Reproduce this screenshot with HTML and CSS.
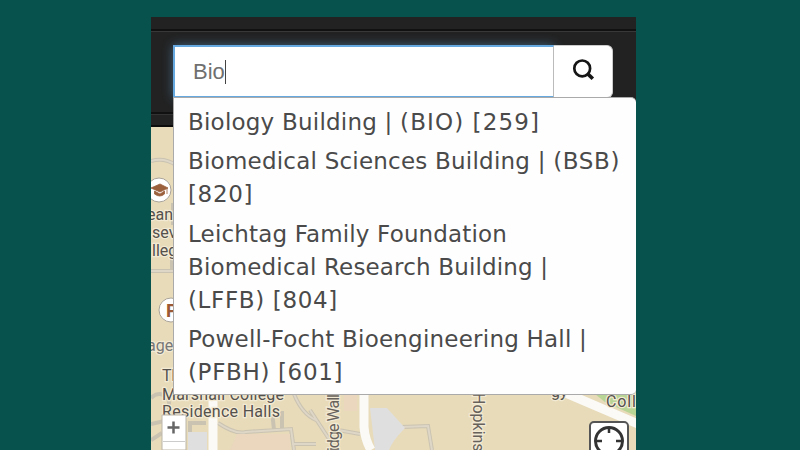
FILE: index.html
```html
<!DOCTYPE html>
<html lang="en">
<head>
<meta charset="utf-8">
<title>Campus map search</title>
<link rel="stylesheet" href="styles.css">
</head>
<body>
<main class="panel">
  <header class="bar">
    <form class="search">
      <div class="field"><span>Bio</span><i class="caret"></i></div>
      <button class="go" type="button" aria-label="Search">
        <svg width="24" height="24" viewBox="0 0 24 24" fill="none" stroke="#161616"><circle cx="10.2" cy="10.4" r="7.9" stroke-width="2.7"/><path d="M15.5 15.6L20.8 20.8" stroke-width="3.6"/></svg>
      </button>
      <ul class="results">
        <li><span class="name">Biology Building | </span><span class="wide">(BIO) [259]</span></li>
        <li class="loose"><span class="name">Biomedical Sciences Building | </span><span class="code">(BSB)<br>[820]</span></li>
        <li>Leichtag Family Foundation<br>Biomedical Research Building |<br><span class="code">(LFFB) [804]</span></li>
        <li><span class="name">Powell-Focht Bioengineering Hall |</span><br><span class="code">(PFBH) [601]</span></li>
      </ul>
    </form>
  </header>
  <svg class="map" width="485" height="323" viewBox="151 127 485 323">
    <rect x="151" y="127" width="485" height="323" fill="#e7dbb9"/>
    <g fill="none" stroke="#cbc3b2" stroke-width="4">
      <path d="M151 161Q164 157 176 165M173 203V225M151 271H176M172 256V271M151 398Q160 389 169 400V420L151 424M151 440L162 433M190 436V423H206M218 423Q236 435 246 432L291 429L294 450M272 411L274 430M282 430V411M294 394Q302 414 316 420M292 444H316M310 410L329 439M338 430L360 434M397 431L402 427L428 426L432 450"/>
    </g>
    <g fill="none" stroke="#ded6c6" stroke-width="2">
      <path d="M151 161Q164 157 176 165M151 271H176M218 423Q236 435 246 432L291 429L294 450M294 394Q302 414 316 420M292 444H316M310 410L329 439M338 430L360 434M397 431L402 427L428 426L432 450"/>
    </g>
    <path d="M188 432H207V450H188ZM370 408H387L405 428Q393 440 389 450H375Z" fill="#e0dfdf"/>
    <path d="M237 434H290V450H230ZM344 395H357V411H344Z" fill="#ead7bd"/>
    <path d="M595 394H636V416L605 402Z" fill="#b9d596"/>
    <path d="M213 394V450M364 394V427Q365 440 371 450M554 388L638 424" fill="none" stroke="#fbfaf7" stroke-width="9"/>
    <g class="labels">
      <text x="147" y="220">ean</text><text x="152" y="238">sev</text><text x="152" y="256">lleg</text>
      <text x="147" y="351" class="grey">age</text>
      <text x="162" y="381">Th</text>
      <text x="162" y="400" textLength="122">Marshall College</text>
      <text x="162" y="417" textLength="118">Residence Halls</text>
      <text x="551" y="397">gy</text>
      <text x="606" y="407" textLength="30">Coll</text>
      <text transform="translate(339 460) rotate(-90)" textLength="66" class="road">Ridge Wall</text>
      <text transform="translate(473 393) rotate(90)" class="road">Hopkins</text>
    </g>
    <circle cx="159" cy="190" r="12" fill="#fff" stroke="#aaa49a"/>
    <path d="M151 188L160 184L168 188L160 192ZM154.500 191L160 194L164.500 191V194Q160 198 154.500 194ZM167 188V194" fill="#9b603c" stroke="#9b603c" stroke-width=".8"/>
    <circle cx="171" cy="310" r="12" fill="#fff" stroke="#aaa49a"/>
    <text x="166" y="317" class="parking">P</text>
    <path d="M162 415H186V450H162Z" fill="#fff" stroke="#bcb6aa"/>
    <path d="M163 441.5H185" stroke="#ccc"/>
    <path d="M167.5 427.5H179.500M173.500 421.500V433.500" stroke="#666" stroke-width="2.5"/>
    <rect x="590" y="422" width="38" height="38" rx="4" fill="#fff" stroke="#555" stroke-width="2"/>
    <circle cx="609" cy="441" r="13.500" fill="none" stroke="#333" stroke-width="3"/>
    <path d="M609 427V433M595 441H602M616 441H623" stroke="#333" stroke-width="2.5"/>
  </svg>
</main>
</body>
</html>
```

FILE: styles.css
```css
* { box-sizing: border-box; }
body { margin: 0; height: 450px; overflow: hidden; background: #07524d; }
.panel { width: 485px; margin: 17px 0 0 151px; height: 433px; overflow: hidden; }
.bar {
  height: 110px;
  padding: 28px 23px 0 22px;
  background: linear-gradient(#222 0 12px, #111 12px 14px, #383838 14px 15px, #222 15px 95px, #111 95px 97px, #333 97px 98px, #222 98px 108px, #0c0c0c 108px);
}
.search { position: relative; display: flex; width: 440px; height: 53px; }
.field {
  display: flex; align-items: center; width: 381px; padding-left: 18px;
  border: 2px solid #66a9e0; border-right: 1px solid #bbb; background: #fff;
  box-shadow: 0 0 10px rgba(102, 175, 233, .45);
  color: #707070; font: 22px/30px "Liberation Sans", sans-serif;
}
.caret { width: 1px; height: 24px; background: #444; }
.go {
  position: relative; display: flex; align-items: center; justify-content: center;
  width: 59px; padding: 0 0 4px 1px; border: 1px solid #ccc; border-left: 0;
  border-radius: 0 6px 6px 0; background: #fff;
}
.results {
  position: absolute; top: 52px; left: 0; width: 463px; height: 298px;
  margin: 0; padding: 8px 0 0 14px; list-style: none;
  background: #fefefe; border: 1px solid #aaa; border-right: 0;
  border-radius: 0 5px 5px 0; color: #4a4a4a;
  font: 23px/33px "DejaVu Sans", sans-serif; letter-spacing: .16px; white-space: nowrap;
}
.results li { margin-bottom: 6px; }
.results .loose { margin-bottom: 7px; }
.name { letter-spacing: .22px; }
.wide { letter-spacing: 1.1px; }
.code { letter-spacing: .65px; }
.map { display: block; }
.labels { font: 16px Roboto, sans-serif; fill: #55514d; stroke: #f3ead4; stroke-width: 2.5px; paint-order: stroke; }
.labels .grey { fill: #777; }
.labels .road { fill: #66615b; }
.parking { font: bold 19px Roboto, sans-serif; fill: #9b5a35; }
```
